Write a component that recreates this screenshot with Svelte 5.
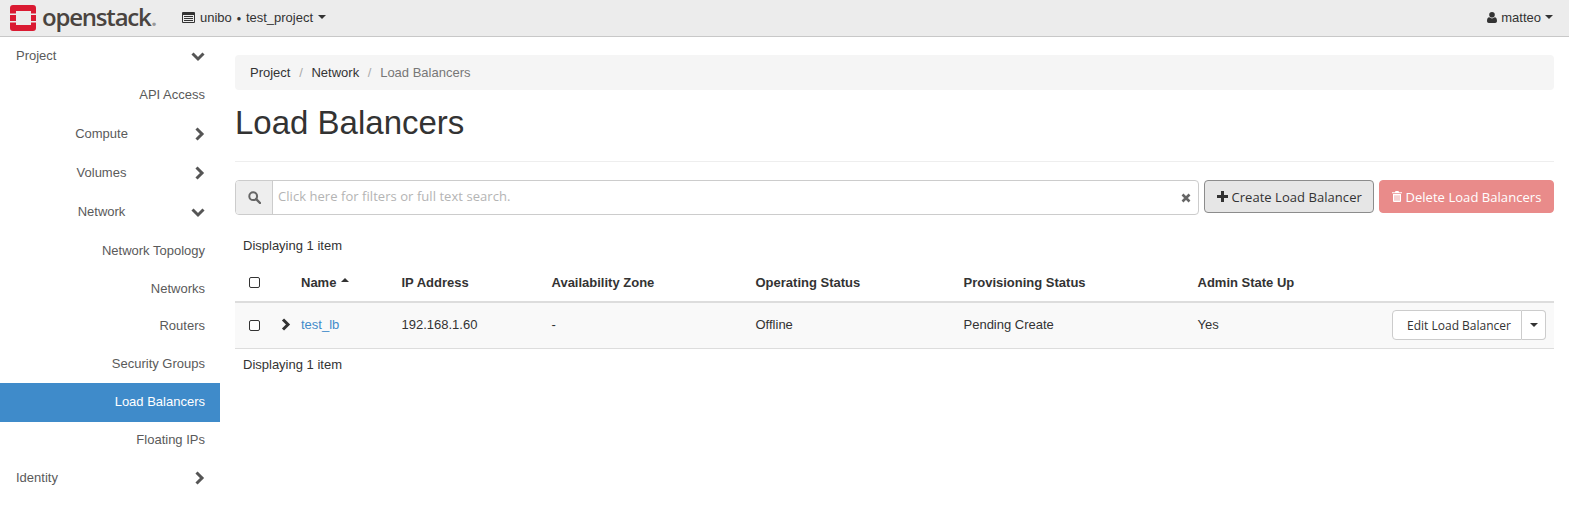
<script lang="ts">
  interface NavRow {
    label: string;
    kind: 'top' | 'group' | 'leaf';
    chevron?: 'down' | 'right';
    active?: boolean;
    height: number;
  }

  const nav: NavRow[] = [
    { label: 'Project', kind: 'top', chevron: 'down', height: 37 },
    { label: 'API Access', kind: 'leaf', height: 40 },
    { label: 'Compute', kind: 'group', chevron: 'right', height: 39 },
    { label: 'Volumes', kind: 'group', chevron: 'right', height: 39 },
    { label: 'Network', kind: 'group', chevron: 'down', height: 39 },
    { label: 'Network Topology', kind: 'leaf', height: 39 },
    { label: 'Networks', kind: 'leaf', height: 37 },
    { label: 'Routers', kind: 'leaf', height: 36 },
    { label: 'Security Groups', kind: 'leaf', height: 40 },
    { label: 'Load Balancers', kind: 'leaf', active: true, height: 39 },
    { label: 'Floating IPs', kind: 'leaf', height: 35 },
    { label: 'Identity', kind: 'top', chevron: 'right', height: 41 },
  ];

  const headers = ['IP Address', 'Availability Zone', 'Operating Status', 'Provisioning Status', 'Admin State Up'];
  const row = ['192.168.1.60', '-', 'Offline', 'Pending Create', 'Yes'];
</script>

<header class="topbar">
  <div class="brand">
    <svg class="logo" width="26" height="26" viewBox="0 0 26 26" aria-hidden="true">
      <path fill="#da1a32" d="M3 0h20a3 3 0 0 1 3 3v5.500h-5V6H6v2.500H0V3a3 3 0 0 1 3-3zM0 10h6v6H0zM21 10h5v6h-5zM0 17.500h6V20h15v-2.500h5V23a3 3 0 0 1-3 3H3a3 3 0 0 1-3-3z"/>
    </svg>
    <span class="wordmark">openstack<span class="dot">.</span></span>
  </div>
  <div class="project-picker">
    <svg width="13" height="11" viewBox="0 0 13 11" aria-hidden="true">
      <path fill="#333" fill-rule="evenodd" d="M1 0h11a1 1 0 0 1 1 1v9a1 1 0 0 1-1 1H1a1 1 0 0 1-1-1V1a1 1 0 0 1 1-1zM1 3v7h11V3zM2 4h9v1H2zM2 6h9v1H2zM2 8h9v1H2z"/>
    </svg>
    <span>unibo <span class="bullet">●</span> test_project</span>
    <span class="caret"></span>
  </div>
  <div class="user">
    <svg width="10" height="11" viewBox="0 0 10 11" aria-hidden="true">
      <path fill="#333" d="M5 0a2.800 2.800 0 0 1 2.800 2.800A2.800 2.800 0 0 1 5 5.600a2.800 2.800 0 0 1-2.800-2.800A2.800 2.800 0 0 1 5 0zM2.300 5.300C3 6 4 6.400 5 6.400s2-.4 2.700-1.100C9.200 5.500 10 6.700 10 9c0 1.200-.8 2-1.800 2H1.800C.8 11 0 10.200 0 9c0-2.300.8-3.500 2.300-3.700z"/>
    </svg>
    <span>matteo</span>
    <span class="caret"></span>
  </div>
</header>

<div class="shell">
  <nav class="sidebar">
    {#each nav as item}
      <div class="nav-row {item.kind}" class:active={item.active} style:height={`${item.height}px`}>
        <span class="nav-label">{item.label}</span>
        {#if item.chevron}
          <svg class="chev" width="14" height="14" viewBox="0 0 14 14" aria-hidden="true">
            {#if item.chevron === 'down'}
              <path d="M1.500 4.500 7 10l5.500-5.500" />
            {:else}
              <path d="M5.500 1.500 11 7l-5.500 5.500" />
            {/if}
          </svg>
        {/if}
      </div>
    {/each}
  </nav>

  <main class="content">
    <ol class="breadcrumb">
      <li>Project</li>
      <li class="sep">/</li>
      <li>Network</li>
      <li class="sep">/</li>
      <li class="current">Load Balancers</li>
    </ol>

    <h1>Load Balancers</h1>

    <div class="actions">
      <div class="search">
        <span class="search-addon">
          <svg width="13" height="13" viewBox="0 0 13 13" aria-hidden="true">
            <circle cx="5.200" cy="5.200" r="3.900" fill="none" stroke="#666" stroke-width="2" />
            <path d="M8.200 8.200 12 12" stroke="#666" stroke-width="2.400" stroke-linecap="round" />
          </svg>
        </span>
        <span class="search-input">Click here for filters or full text search.</span>
        <svg class="clear" width="10" height="10" viewBox="0 0 10 10" aria-hidden="true">
          <path d="M1.500 1.500l7 7M8.500 1.500l-7 7" stroke="#666" stroke-width="2.600" />
        </svg>
      </div>
      <button class="btn create">
        <svg width="11" height="11" viewBox="0 0 11 11" aria-hidden="true">
          <path fill="#333" d="M4 0h3v4h4v3H7v4H4V7H0V4h4z" />
        </svg>
        Create Load Balancer
      </button>
      <button class="btn delete">
        <svg width="10" height="11" viewBox="0 0 10 11" aria-hidden="true">
          <path fill="#fff" fill-rule="evenodd" d="M3.500 0h3L7 1.200h3v1H0v-1h3zM1 3h8v7a1 1 0 0 1-1 1H2a1 1 0 0 1-1-1zM2.600 4.200v5.600h.8V4.200zM4.600 4.200v5.600h.8V4.200zM6.600 4.200v5.600h.8V4.200z" />
        </svg>
        Delete Load Balancers
      </button>
    </div>

    <div class="count">Displaying 1 item</div>

    <table>
      <colgroup>
        <col style="width: 39px" />
        <col style="width: 19px" />
        <col style="width: 100.500px" />
        <col style="width: 150px" />
        <col style="width: 204px" />
        <col style="width: 208px" />
        <col style="width: 234px" />
        <col style="width: 190px" />
        <col />
      </colgroup>
      <thead>
        <tr>
          <th class="check"><span class="box"></span></th>
          <th></th>
          <th>Name <span class="sort"></span></th>
          {#each headers as h}
            <th>{h}</th>
          {/each}
          <th></th>
        </tr>
      </thead>
      <tbody>
        <tr>
          <td class="check"><span class="box"></span></td>
          <td class="expander">
            <svg width="10" height="13" viewBox="0 0 10 13" aria-hidden="true">
              <path d="M2 1.500 7 6.500l-5 5" />
            </svg>
          </td>
          <td><span class="link">test_lb</span></td>
          {#each row as v}
            <td>{v}</td>
          {/each}
          <td class="row-actions">
            <div class="btn-group">
              <button class="btn edit">Edit Load Balancer</button>
              <button class="btn more"><span class="caret"></span></button>
            </div>
          </td>
        </tr>
      </tbody>
    </table>

    <div class="count bottom">Displaying 1 item</div>
  </main>
</div>

<style>
  :global(body) {
    margin: 0;
    background: #fff;
    color: #333;
    font-family: "Liberation Sans", Arial, sans-serif;
    font-size: 13px;
    overflow: hidden;
  }
  .topbar {
    display: flex;
    align-items: center;
    height: 36px;
    background: #ececec;
    border-bottom: 1px solid #c8c8c8;
    box-sizing: content-box;
  }
  .brand {
    display: flex;
    align-items: center;
    gap: 6px;
    width: 182px;
    padding-left: 10px;
    box-sizing: border-box;
  }
  .logo {
    flex: none;
  }
  .wordmark {
    font-family: "Open Sans", sans-serif;
    font-size: 24px;
    font-weight: 600;
    letter-spacing: -1.200px;
    color: #4a4440;
    line-height: 1;
    margin-top: -2px;
  }
  .dot {
    color: #999;
  }
  .project-picker {
    display: flex;
    align-items: center;
    gap: 5px;
    margin-top: -2px;
  }
  .bullet {
    font-size: 8px;
    vertical-align: 1px;
    margin: 0 1px;
  }
  .user {
    margin-left: auto;
    padding-right: 16px;
    display: flex;
    align-items: center;
    gap: 4px;
    margin-top: -2px;
  }
  .caret {
    display: inline-block;
    width: 0;
    height: 0;
    border-top: 4px solid #333;
    border-left: 4px solid transparent;
    border-right: 4px solid transparent;
  }
  .shell {
    display: flex;
  }
  .sidebar {
    width: 220px;
    flex: none;
    color: #5a5a5a;
  }
  .nav-row {
    display: flex;
    align-items: center;
    box-sizing: border-box;
    padding-right: 15px;
  }
  .nav-label {
    flex: 1;
  }
  .top .nav-label {
    padding-left: 16px;
  }
  .group .nav-label {
    text-align: center;
    padding-left: 12px;
  }
  .leaf .nav-label {
    text-align: right;
  }
  .nav-row.active {
    background: #3f8bca;
    color: #fff;
    padding-bottom: 2px;
  }
  .chev {
    flex: none;
  }
  .chev path {
    fill: none;
    stroke: #555;
    stroke-width: 3;
  }
  .content {
    flex: 1;
    min-width: 0;
    padding: 18px 15px 0 15px;
  }
  .breadcrumb {
    display: flex;
    align-items: center;
    gap: 8.700px;
    list-style: none;
    margin: 0;
    padding: 0 15px;
    height: 35px;
    background: #f5f5f5;
    border-radius: 4px;
    color: #333;
  }
  .breadcrumb .sep {
    color: #aaa;
  }
  .breadcrumb .current {
    color: #777;
  }
  h1 {
    margin: 0;
    padding: 14px 0 20px;
    height: 72px;
    box-sizing: border-box;
    font-size: 33px;
    font-weight: 400;
    line-height: 37px;
    border-bottom: 1px solid #eee;
    color: #333;
  }
  .actions {
    display: flex;
    align-items: flex-start;
    gap: 5px;
    margin-top: 18px;
  }
  .search {
    flex: 1;
    display: flex;
    align-items: center;
    height: 35px;
    box-sizing: border-box;
    border: 1px solid #ccc;
    border-radius: 4px;
    background: #fff;
    font-family: "Open Sans", sans-serif;
    font-size: 13px;
    letter-spacing: 0.05px;
  }
  .search-addon {
    width: 37px;
    height: 100%;
    flex: none;
    display: flex;
    align-items: center;
    justify-content: center;
    background: #eee;
    border-right: 1px solid #ccc;
    border-radius: 3px 0 0 3px;
    box-sizing: border-box;
  }
  .search-input {
    flex: 1;
    padding-left: 5px;
    padding-bottom: 4px;
    color: #b4b4b4;
  }
  .clear {
    margin-right: 7px;
  }
  .btn {
    font-family: "Open Sans", sans-serif;
    font-size: 13px;
    height: 33px;
    padding: 0 12px;
    border-radius: 4px;
    border: 1px solid #adadad;
    background: #fff;
    color: #333;
    white-space: nowrap;
  }
  .create {
    background: #e6e6e6;
    border-color: #8c8c8c;
    width: 170px;
    padding: 1px 14px 0 12px;
    letter-spacing: 0.05px;
  }
  .delete {
    background: #e98b8a;
    border-color: #e98b8a;
    color: #fff;
    width: 175px;
    padding: 1px 14px 0 12px;
    letter-spacing: 0.05px;
  }
  .count {
    padding: 0 8px;
    margin-top: 22px;
    line-height: 18px;
  }
  table {
    width: 100%;
    table-layout: fixed;
    border-collapse: collapse;
    margin-top: 9px;
  }
  th {
    text-align: left;
    font-weight: 700;
    height: 38px;
    padding: 0 8px;
    box-sizing: border-box;
    border-bottom: 2px solid #ddd;
    white-space: nowrap;
  }
  td {
    height: 46px;
    padding: 0 8px 2px;
    box-sizing: border-box;
    background: #f9f9f9;
    border-bottom: 1px solid #ddd;
    white-space: nowrap;
  }
  th.check,
  td.check {
    padding: 0 0 0 14px;
  }
  .box {
    display: block;
    width: 9px;
    height: 9px;
    background: #fff;
    border: 1px solid #333;
    border-radius: 2px;
  }
  td.expander {
    padding: 0 0 2px;
    text-align: left;
  }
  .expander svg {
    display: block;
    margin-left: 7px;
  }
  .expander path {
    fill: none;
    stroke: #333;
    stroke-width: 3;
  }
  .sort {
    display: inline-block;
    width: 0;
    height: 0;
    border-bottom: 4px solid #333;
    border-left: 4px solid transparent;
    border-right: 4px solid transparent;
    vertical-align: 5px;
    margin-left: 1px;
  }
  .link {
    color: #428bca;
  }
  td.row-actions {
    padding: 0 8px 0 0;
    text-align: right;
  }
  .btn-group {
    display: inline-flex;
    vertical-align: middle;
  }
  .edit {
    font-size: 12px;
    height: 30px;
    border-color: #ccc;
    border-radius: 4px 0 0 4px;
    padding: 0 10px 0 14px;
  }
  .more {
    height: 30px;
    border-color: #ccc;
    border-left: none;
    border-radius: 0 4px 4px 0;
    padding: 0 7.500px;
    display: flex;
    align-items: center;
  }
  .count.bottom {
    margin-top: 7px;
  }
</style>
